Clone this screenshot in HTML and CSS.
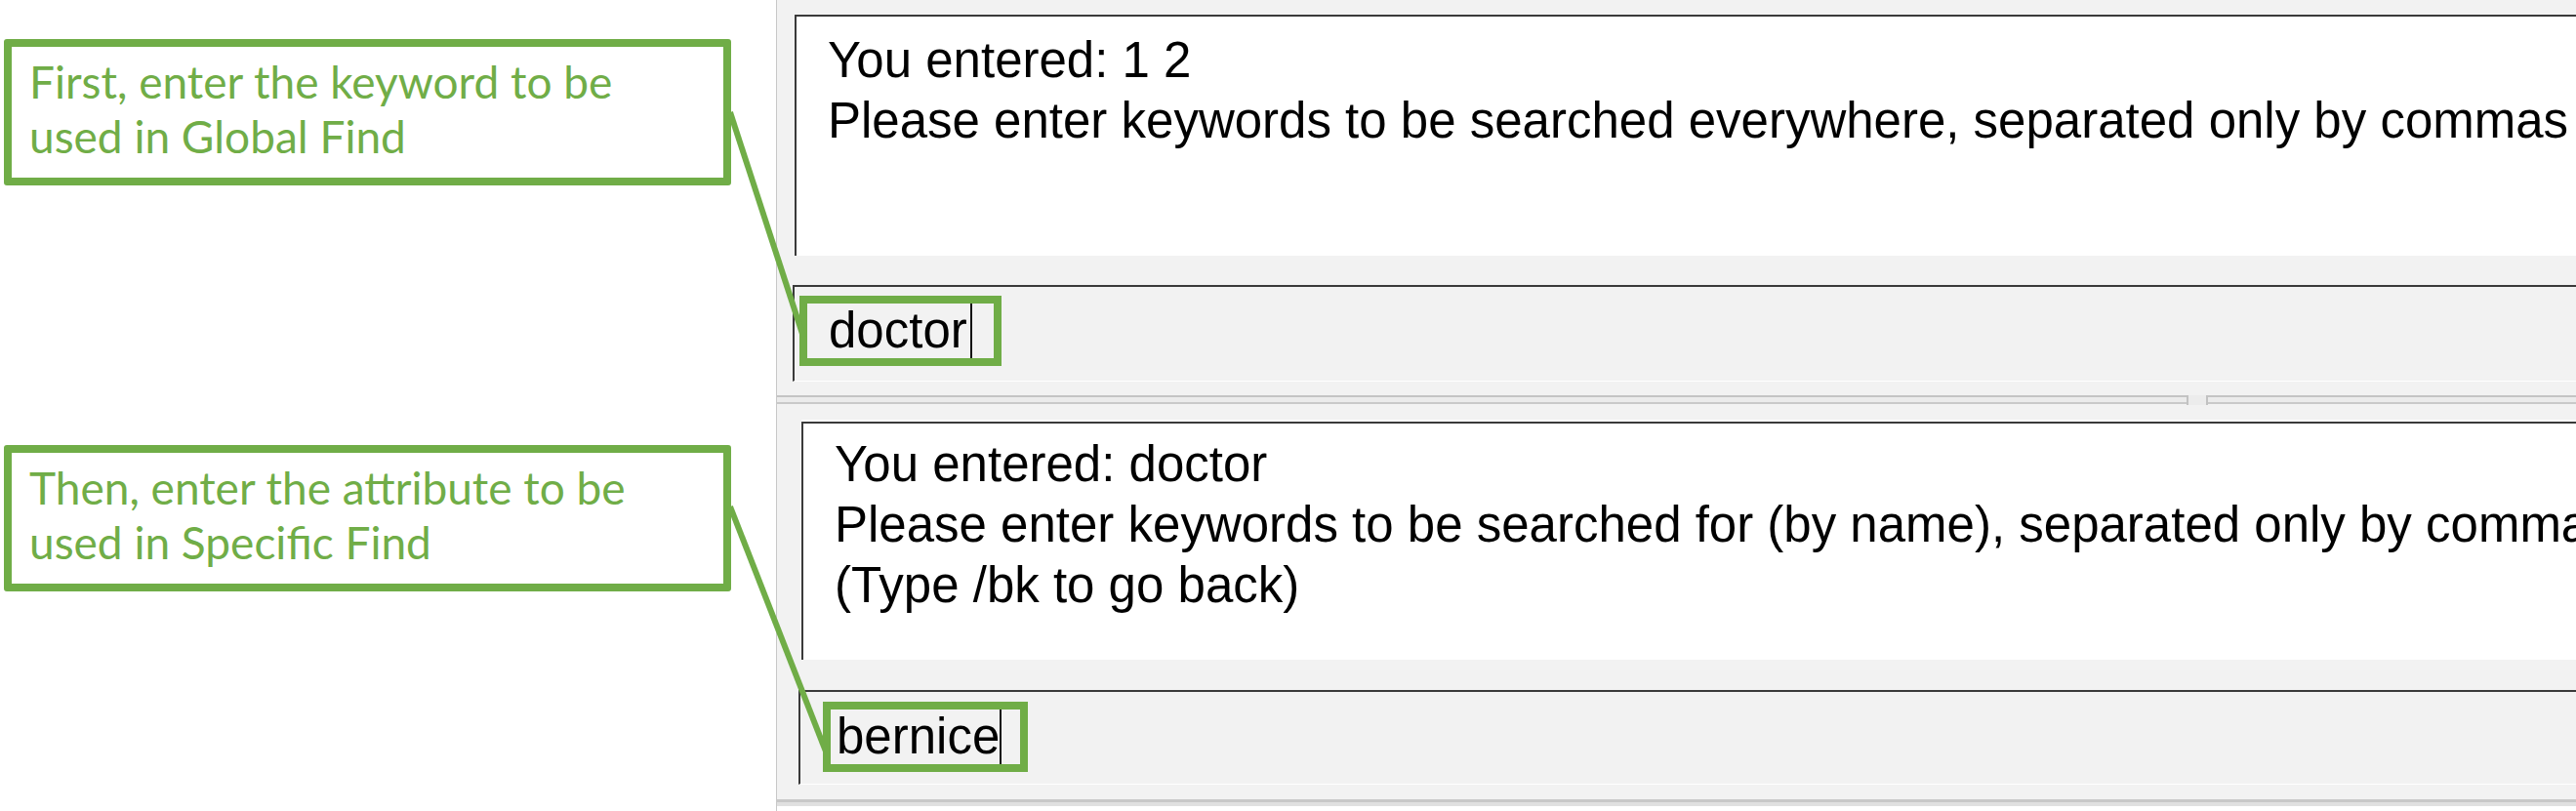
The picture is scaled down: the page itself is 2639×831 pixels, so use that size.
FILE: index.html
```html
<!DOCTYPE html>
<html lang="en">
<head>
<meta charset="utf-8">
<title>Find walkthrough</title>
<link rel="stylesheet" href="styles.css">
</head>
<body>
<div class="page">
  <aside class="notes">
    <div class="callout callout-first">First, enter the keyword to be used in Global Find</div>
    <div class="callout callout-second">Then, enter the attribute to be used in Specific Find</div>
  </aside>
  <main class="app">
    <section class="pane pane-top">
      <div class="output">
        <div class="line">You entered: 1 2</div>
        <div class="line">Please enter keywords to be searched everywhere, separated only by commas</div>
      </div>
      <div class="input">
        <span class="hl hl-doctor"><span class="typed">doctor</span><span class="caret"></span></span>
      </div>
    </section>
    <div class="divider"><span class="grip"></span></div>
    <section class="pane pane-bottom">
      <div class="output">
        <div class="line">You entered: doctor</div>
        <div class="line">Please enter keywords to be searched for (by name), separated only by commas</div>
        <div class="line">(Type /bk to go back)</div>
      </div>
      <div class="input">
        <span class="hl hl-bernice"><span class="typed">bernice</span><span class="caret"></span></span>
      </div>
    </section>
    <div class="app-edge"></div>
  </main>
</div>
<svg class="connectors" width="2639" height="831" viewBox="0 0 2639 831" aria-hidden="true">
  <line x1="748" y1="115" x2="823" y2="345" />
  <line x1="748" y1="519" x2="846" y2="770" />
</svg>
</body>
</html>
```
FILE: styles.css
```css
* { box-sizing: border-box; }
html, body { margin: 0; padding: 0; background: #ffffff; }
body { width: 2639px; height: 831px; overflow: hidden; position: relative; }

.page { display: flex; width: 2639px; height: 831px; }

/* annotations */
.notes {
  width: 795px;
  flex: none;
  display: flex;
  flex-direction: column;
  gap: 266px;
  padding: 40px 0 0 4px;
}
.callout {
  width: 745px;
  height: 150px;
  border: 8px solid #70ad47;
  border-radius: 3px;
  padding: 8px 40px 0 18px;
  font-family: "Lato", "Open Sans", sans-serif;
  font-size: 46px;
  line-height: 56px;
  color: #70ad47;
}

/* application */
.app {
  flex: 1;
  min-width: 0;
  height: 831px;
  display: flex;
  flex-direction: column;
  border-left: 1px solid #c8c8c8;
  background: transparent;
  font-family: "Liberation Sans", Arial, Helvetica, sans-serif;
  font-size: 51px;
  color: #000;
  overflow: hidden;
}
.pane { background: #f2f2f2; display: flex; flex-direction: column; }
.pane-top { height: 405px; padding: 15px 0 0 16px; }
.pane-bottom { height: 406px; padding: 16px 0 0 22px; border-bottom: 3px solid #c8c8c8; }

.output {
  background: #ffffff;
  border-top: 2px solid #3a3a3a;
  border-left: 2px solid #3a3a3a;
  padding-left: 32px;
  white-space: nowrap;
  overflow: hidden;
}
.line { line-height: 62px; }
.pane-top .output { height: 247px; margin-left: 2px; padding-top: 14px; }
.pane-bottom .output { height: 244px; margin-left: 3px; padding-top: 11px; box-shadow: 0 -2px 0 #ffffff; }

.input {
  border-top: 2px solid #3a3a3a;
  border-left: 2px solid #3a3a3a;
  border-bottom: 1px solid #ffffff;
  display: flex;
  align-items: flex-start;
}
.pane-top .input { margin-top: 30px; height: 99px; padding: 9px 0 0 5px; }
.pane-bottom .input { margin-top: 31px; height: 97px; padding: 10px 0 0 23px; }

.hl {
  display: inline-flex;
  align-items: stretch;
  height: 72px;
  border: 8px solid #70ad47;
  line-height: 56px;
}
.hl-doctor { width: 207px; padding-left: 22px; }
.hl-bernice { width: 210px; padding-left: 6px; }
.typed { white-space: nowrap; }
.caret { width: 2px; background: #111; }
.hl-doctor .caret { margin-left: 3px; }
.hl-bernice .caret { margin-left: 0; }

.divider {
  height: 11px;
  flex: none;
  padding-left: 1444px;
  background: linear-gradient(to bottom, #c4c4c4 0, #c4c4c4 2px, #ebebeb 2px, #ebebeb 7px, #c9c9c9 7px, #c9c9c9 9px, #f2f2f2 9px);
}
.grip {
  display: block;
  width: 22px;
  height: 10px;
  border-left: 2px solid #c2c2c2;
  border-right: 2px solid #c2c2c2;
  background: #ececec;
}
.app-edge { height: 4px; background: #e0e0e0; flex: none; }

/* connector lines that sit over the page */
.connectors {
  position: absolute;
  left: 0;
  top: 0;
  pointer-events: none;
}
.connectors line { stroke: #70ad47; stroke-width: 6; }
```
